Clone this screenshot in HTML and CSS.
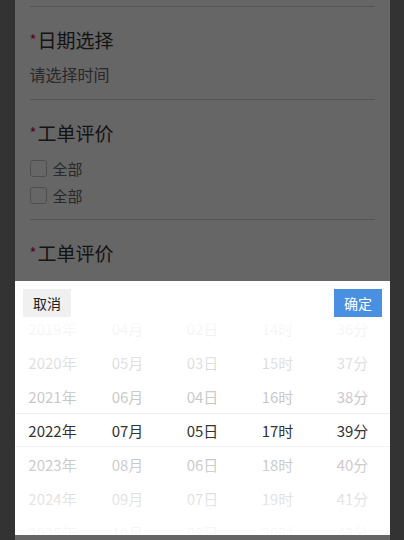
FILE: index.html
```html
<!DOCTYPE html>
<html>
	<head>
		<title>工单</title>
		<meta charset="utf-8">
		<meta name="viewport" content="width=device-width, initial-scale=1">
		<link rel="stylesheet" href="styles.css">
	</head>
	<body>
		<div class="page">
			<div class="field">
				<div class="label"><span class="req">*</span>日期选择</div>
				<div class="value">请选择时间</div>
			</div>
			<div class="field checks">
				<div class="label"><span class="req">*</span>工单评价</div>
				<label class="check"><span class="box"></span>全部</label>
				<label class="check"><span class="box"></span>全部</label>
			</div>
			<div class="field checks">
				<div class="label"><span class="req">*</span>工单评价</div>
			</div>
		</div>
		<div class="mask"></div>
		<div class="picker">
			<div class="picker-head">
				<button class="btn cancel">取消</button>
				<button class="btn ok">确定</button>
			</div>
			<div class="wheel">
				<div class="cols">
					<ul class="col">
						<li>2019年</li><li>2020年</li><li>2021年</li><li class="on">2022年</li><li>2023年</li><li>2024年</li><li>2025年</li>
					</ul>
					<ul class="col">
						<li>04月</li><li>05月</li><li>06月</li><li class="on">07月</li><li>08月</li><li>09月</li><li>10月</li>
					</ul>
					<ul class="col">
						<li>02日</li><li>03日</li><li>04日</li><li class="on">05日</li><li>06日</li><li>07日</li><li>08日</li>
					</ul>
					<ul class="col">
						<li>14时</li><li>15时</li><li>16时</li><li class="on">17时</li><li>18时</li><li>19时</li><li>20时</li>
					</ul>
					<ul class="col">
						<li>36分</li><li>37分</li><li>38分</li><li class="on">39分</li><li>40分</li><li>41分</li><li>42分</li>
					</ul>
				</div>
				<div class="band"></div>
				<div class="fade top"></div>
				<div class="fade bottom"></div>
			</div>
		</div>
	</body>
</html>
```

FILE: styles.css
```css
html{
	font-family: "Noto Sans CJK SC", "Noto Sans", sans-serif;
	font-size: 15px;
}
body{
	margin: 0;
	background-color: #808080;
	height: 540px;
	overflow: hidden;
}
.page{
	width: 375px;
	margin: 0 auto;
	background-color: #fff;
	padding-top: 6px;
	height: 534px;
	overflow: hidden;
}
.field{
	margin: 0 15px;
	border-top: 1px solid #d4d4d4;
	padding: 19px 0 14px;
}
.field.checks{
	padding-bottom: 10px;
}
.label{
	font-size: 19px;
	line-height: 28px;
	height: 28px;
	color: #333;
}
.req{
	color: #e0103a;
	font-size: 15px;
	line-height: 0;
	vertical-align: 2px;
	margin-right: 1px;
}
.value{
	margin-top: 9px;
	font-size: 16px;
	line-height: 22px;
	height: 22px;
	color: #666;
}
.check{
	display: flex;
	align-items: center;
	height: 27px;
	color: #666;
	font-size: 15px;
}
.check:first-of-type{
	margin-top: 8px;
}
.box{
	width: 15px;
	height: 15px;
	border: 1px solid #c4c4c4;
	border-radius: 3px;
	margin-right: 6px;
}
.mask{
	position: fixed;
	inset: 0;
	background-color: rgba(0, 0, 0, 0.6);
}
.picker{
	position: fixed;
	left: 15px;
	bottom: 5px;
	width: 375px;
	height: 254px;
	background-color: #fff;
	display: flex;
	flex-direction: column;
}
.picker-head{
	display: flex;
	justify-content: space-between;
	padding: 8px 8px 0;
	height: 33px;
	position: relative;
	z-index: 2;
	background-color: #fff;
}
.btn{
	width: 48px;
	height: 28px;
	border: none;
	font-family: inherit;
	font-size: 14px;
	padding: 0;
}
.cancel{
	background-color: #f0f0f0;
	color: #222;
}
.ok{
	background-color: #4a90e2;
	color: #fff;
}
.wheel{
	position: relative;
	flex: 1;
	overflow: hidden;
}
.cols{
	display: grid;
	grid-template-columns: repeat(5, 1fr);
	margin-top: -10px;
}
.col{
	list-style: none;
	margin: 0;
	padding: 0;
}
.col li{
	height: 34px;
	line-height: 34px;
	text-align: center;
	color: #aaa;
}
.col li.on{
	color: #333;
}
.band{
	position: absolute;
	left: 0;
	right: 0;
	top: 91px;
	height: 32px;
	border-top: 1px solid #efefef;
	border-bottom: 1px solid #efefef;
}
.fade{
	position: absolute;
	left: 0;
	right: 0;
	height: 91px;
}
.fade.top{
	top: 0;
	background: linear-gradient(to bottom, rgba(255,255,255,0.95), rgba(255,255,255,0.25));
}
.fade.bottom{
	bottom: 0;
	height: 89px;
	background: linear-gradient(to top, rgba(255,255,255,0.95), rgba(255,255,255,0.25));
}
```
